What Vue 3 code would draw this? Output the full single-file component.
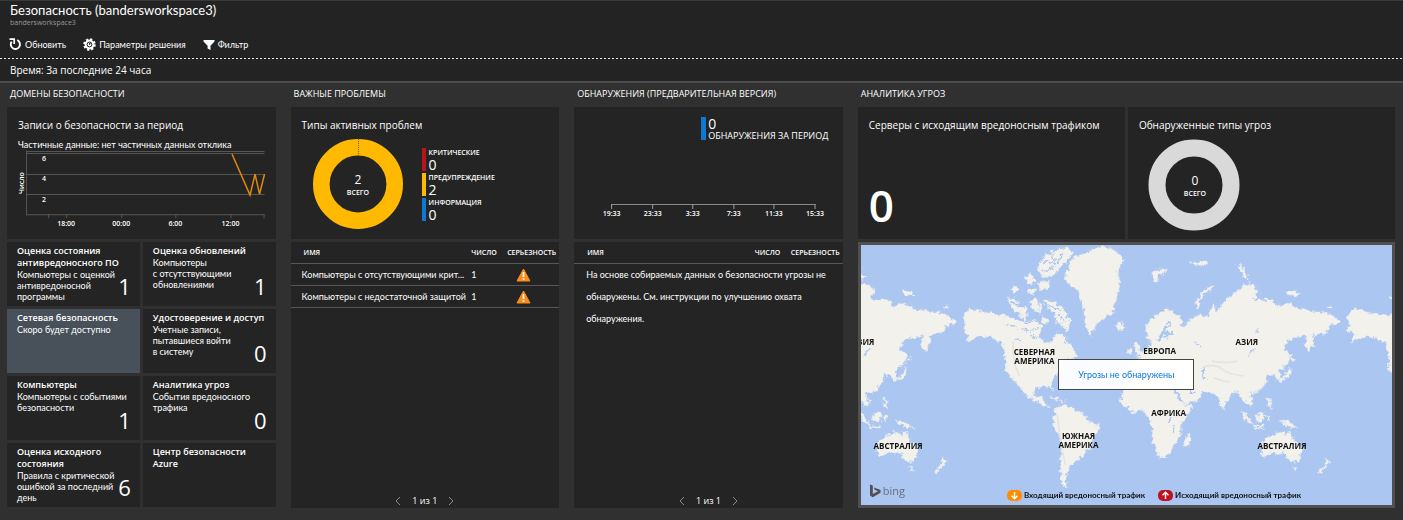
<script setup>
const tiles = [
  { title: 'Оценка состояния\nантивредоносного ПО', text: 'Компьютеры с оценкой\nантивредоносной\nпрограммы', value: '1' },
  { title: 'Оценка обновлений', text: 'Компьютеры\nс отсутствующими\nобновлениями', value: '1' },
  { title: 'Сетевая безопасность', text: 'Скоро будет доступно', value: '', active: true },
  { title: 'Удостоверение и доступ', text: 'Учетные записи,\nпытавшиеся войти\nв систему', value: '0' },
  { title: 'Компьютеры', text: 'Компьютеры с событиями\nбезопасности', value: '1' },
  { title: 'Аналитика угроз', text: 'События вредоносного\nтрафика', value: '0' },
  { title: 'Оценка исходного\nсостояния', text: 'Правила с критической\nошибкой за последний\nдень', value: '6' },
  { title: 'Центр безопасности\nAzure', text: '', value: '' }
]
const legend = [
  { name: 'КРИТИЧЕСКИЕ', value: 0, kind: 'red' },
  { name: 'ПРЕДУПРЕЖДЕНИЕ', value: 2, kind: 'amber' },
  { name: 'ИНФОРМАЦИЯ', value: 0, kind: 'blue' }
]
const issues = [
  { name: 'Компьютеры с отсутствующими крит...', count: 1 },
  { name: 'Компьютеры с недостаточной защитой', count: 1 }
]
const recordTicks = [
  { x: 59, label: '18:00' },
  { x: 114, label: '00:00' },
  { x: 168, label: '6:00' },
  { x: 223, label: '12:00' }
]
const detectTicks = [
  { x: 37, label: '19:33' },
  { x: 78, label: '23:33' },
  { x: 118, label: '3:33' },
  { x: 159, label: '7:33' },
  { x: 199, label: '11:33' },
  { x: 240, label: '15:33' }
]
const mapLabels = [
  { x: 2, y: 100, t: 'АЗИЯ' },
  { x: 385, y: 100, t: 'АЗИЯ' },
  { x: 173, y: 110, t: 'СЕВЕРНАЯ' },
  { x: 173, y: 119, t: 'АМЕРИКА' },
  { x: 298, y: 109, t: 'ЕВРОПА' },
  { x: 307, y: 171, t: 'АФРИКА' },
  { x: 217, y: 194, t: 'ЮЖНАЯ' },
  { x: 217, y: 203, t: 'АМЕРИКА' },
  { x: 37, y: 204, t: 'АВСТРАЛИЯ' },
  { x: 420, y: 204, t: 'АВСТРАЛИЯ' }
]
</script>

<template>
  <main class="page">
    <header class="top">
      <h1>Безопасность (bandersworkspace3)</h1>
      <p class="workspace">bandersworkspace3</p>
      <nav class="toolbar">
        <button type="button">
          <svg width="13" height="13" viewBox="0 0 13 13"><path d="M8.200 2.200A4.600 4.600 0 1 1 2.700 3.600" fill="none" stroke="#fff" stroke-width="1.900" /><path d="M0.500 1.200H5.200V6" fill="none" stroke="#fff" stroke-width="1.700" /></svg>
          Обновить
        </button>
        <button type="button">
          <svg width="13" height="13" viewBox="0 0 13 13"><circle cx="6.500" cy="6.500" r="4.900" fill="#fff" /><circle cx="6.500" cy="6.500" r="5.300" fill="none" stroke="#fff" stroke-width="2" stroke-dasharray="2.200 1.960" /><circle cx="6.500" cy="6.500" r="2.400" fill="none" stroke="#222" stroke-width="1" /><path d="M6.500 5v1.800l1.600-1.600" fill="none" stroke="#222" stroke-width="0.900" /></svg>
          Параметры решения
        </button>
        <button type="button">
          <svg width="12" height="12" viewBox="0 0 12 12"><path d="M0.500 1h11v1.600L7.500 6.800V11L4.600 9.400V6.800L0.500 2.600z" fill="#fff" /></svg>
          Фильтр
        </button>
      </nav>
      <div class="dashes"></div>
      <p class="time">Время: За последние 24 часа</p>
    </header>

    <div class="columns">
      <section class="column">
        <h2>ДОМЕНЫ БЕЗОПАСНОСТИ</h2>
        <div class="panel">
          <h3>Записи о безопасности за период</h3>
          <p class="note">Частичные данные: нет частичных данных отклика</p>
          <svg class="plot records" viewBox="0 0 268 80">
            <g stroke="#555" fill="none">
              <path d="M19.500 0V62M19 1.500H257M19 3.500H257M19 24.500H257M19 44.500H257M19 64.500H257" />
              <path d="M19.500 60v5M41.500 64v4M59.500 64v4M114.500 64v4M168.500 64v4M223.500 64v4M256.500 64v4" />
            </g>
            <path d="M224.500 4L242.500 45L247.500 24L252 44L257 24" fill="none" stroke="#e08a08" stroke-width="1.500" />
            <text x="37" y="11">6</text>
            <text x="37" y="31">4</text>
            <text x="37" y="52">2</text>
            <text v-for="t in recordTicks" :key="t.label" :x="t.x" y="76">{{ t.label }}</text>
            <text class="axis" transform="translate(17 33) rotate(-90)">Число</text>
          </svg>
        </div>
        <div class="tiles">
          <button v-for="t in tiles" :key="t.title" type="button" class="tile" :class="{ active: t.active }">
            <strong>{{ t.title }}</strong>
            <span>{{ t.text }}</span>
            <b v-if="t.value">{{ t.value }}</b>
          </button>
        </div>
      </section>

      <section class="column">
        <h2>ВАЖНЫЕ ПРОБЛЕМЫ</h2>
        <div class="panel">
          <h3>Типы активных проблем</h3>
          <div class="chart-row">
            <svg class="donut" width="92" height="92" viewBox="0 0 92 92">
              <circle cx="46" cy="46" r="36.700" fill="none" stroke="#ffb900" stroke-width="16.600" />
              <path d="M46.500 1v17" stroke="#7a5a10" stroke-dasharray="1 1" />
              <text class="num" x="46" y="46">2</text>
              <text class="cap" x="46" y="57">ВСЕГО</text>
            </svg>
            <ul class="legend">
              <li v-for="l in legend" :key="l.name" :class="l.kind">
                <span>{{ l.name }}</span>
                <b>{{ l.value }}</b>
              </li>
            </ul>
          </div>
        </div>
        <div class="list">
          <table>
            <thead>
              <tr><th class="c-name">ИМЯ</th><th class="c-count">ЧИСЛО</th><th class="c-sev">СЕРЬЕЗНОСТЬ</th></tr>
            </thead>
            <tbody>
              <tr v-for="i in issues" :key="i.name">
                <td class="c-name">{{ i.name }}</td>
                <td class="c-count">{{ i.count }}</td>
                <td class="c-icon">
                  <svg width="15" height="14" viewBox="0 0 15 14"><path d="M7.500 1L14 13H1z" fill="#f78d1e" stroke="#f78d1e" stroke-linejoin="round" /><path d="M7.500 4v5M7.500 10.200v1.600" stroke="#fff" stroke-width="1.600" /></svg>
                </td>
              </tr>
            </tbody>
          </table>
          <div class="pager">
            <button type="button" aria-label="Назад"><svg width="6" height="10" viewBox="0 0 6 10"><path d="M5 1L1 5l4 4" /></svg></button>
            <span>1 из 1</span>
            <button type="button" aria-label="Вперед"><svg width="6" height="10" viewBox="0 0 6 10"><path d="M1 1l4 4-4 4" /></svg></button>
          </div>
        </div>
      </section>

      <section class="column">
        <h2>ОБНАРУЖЕНИЯ (ПРЕДВАРИТЕЛЬНАЯ ВЕРСИЯ)</h2>
        <div class="panel detect">
          <div class="stat">
            <b>0</b>
            <span>ОБНАРУЖЕНИЯ ЗА ПЕРИОД</span>
          </div>
          <svg class="plot" viewBox="0 0 268 24">
            <path d="M37 4.500H241" stroke="#8a8a8a" />
            <path v-for="t in detectTicks" :key="'m' + t.x" :d="`M${t.x + 0.5} 4v5`" stroke="#a0a0a0" />
            <text v-for="t in detectTicks" :key="t.label" :x="t.x + 0.5" y="16">{{ t.label }}</text>
          </svg>
        </div>
        <div class="list">
          <table>
            <thead>
              <tr><th class="c-name">ИМЯ</th><th class="c-count">ЧИСЛО</th><th class="c-sev">СЕРЬЕЗНОСТЬ</th></tr>
            </thead>
            <tbody>
              <tr><td colspan="3" class="message">На основе собираемых данных о безопасности угрозы не обнаружены. См. инструкции по улучшению охвата обнаружения.</td></tr>
            </tbody>
          </table>
          <div class="pager">
            <button type="button" aria-label="Назад"><svg width="6" height="10" viewBox="0 0 6 10"><path d="M5 1L1 5l4 4" /></svg></button>
            <span>1 из 1</span>
            <button type="button" aria-label="Вперед"><svg width="6" height="10" viewBox="0 0 6 10"><path d="M1 1l4 4-4 4" /></svg></button>
          </div>
        </div>
      </section>

      <section class="column">
        <h2>АНАЛИТИКА УГРОЗ</h2>
        <div class="pair">
          <div class="panel servers">
            <h3>Серверы с исходящим вредоносным трафиком</h3>
            <b class="huge">0</b>
          </div>
          <div class="panel threats">
            <h3>Обнаруженные типы угроз</h3>
            <svg class="donut" width="92" height="92" viewBox="0 0 92 92">
              <circle cx="46" cy="46" r="37" fill="none" stroke="#d9d9d9" stroke-width="17" />
              <text class="num" x="47" y="46">0</text>
              <text class="cap" x="47" y="57">ВСЕГО</text>
            </svg>
          </div>
        </div>
        <div class="map">
          <svg class="world" viewBox="0 0 530 260" preserveAspectRatio="xMidYMid slice">
            <defs>
              <filter id="coast" x="0" y="0" width="530" height="260" filterUnits="userSpaceOnUse">
                <feTurbulence type="fractalNoise" baseFrequency="0.25" numOctaves="3" seed="4" result="n" />
                <feDisplacementMap in="SourceGraphic" in2="n" scale="7" xChannelSelector="R" yChannelSelector="G" />
              </filter>
              <g id="east">
                <path d="M284 87L286 78L294 70L306 64L319 72L321 77L318 80L324 80L329 73L339 70L347 72L349 62L352 58L354 67L361 58L374 47L387 38L397 45L392 55L411 55L415 62L426 58L437 64L454 67L467 68L478 77L467 82L464 88L451 90L452 98L447 107L443 100L446 90L437 92L427 95L421 103L429 110L426 119L416 127L419 134L416 135L412 129L406 130L404 138L397 147L387 148L392 158L387 161L379 153L376 147L371 148L361 164L356 153L352 148L341 147L336 155L321 160L314 147L314 135L316 125L290 122L277 125L265 130L268 118L277 113L283 105L289 100L288 95z" />
                <path d="M399 197L407 192L416 187L422 187L424 191L428 185L432 195L441 205L436 217L427 215L422 208L411 208L400 212z" />
                <path d="M431 222h4l-2 4zM464 212l4 5-3 4-7 8-2-2 7-8zM417 175l8 1 12 7-9-1-7-3zM394 171l8-5 2 5-4 6-6-1zM379 165l4 3 9 11-2 1-7-6zM391 180l12 1-1 2-11-1zM405 171l4 0-2 6zM427 122l3 2-4 9-9 4 0-2 6-4zM429 112l5 2-4 3zM405 153l3 0 2 12-3-4zM360 162l3 3-1 2z" />
                <path d="M289 28l8-4 9 0-3 5-6 1-1 8-4-4zM350 41l-9 5-6 9-1 8 4 1-1-7 5-8 8-4zM377 17l5 5 0 6 6 5-5 1-6-9zM327 19l6-3 2 2 8-2 3 3-8 3-4-2zM424 46l7 0 7 4-5 1-8-1zM466 62h4v2h-4zM455 112l2 2z" />
              </g>
              <g id="west">
                <path d="M101 72L109 64L127 68L144 70L161 77L176 75L181 82L177 92L186 98L192 95L194 87L202 90L211 102L217 112L205 115L197 128L189 138L192 147L187 141L174 142L172 150L177 153L182 151L182 157L191 163L181 160L167 152L161 146L152 133L157 142L150 133L144 125L144 115L141 98L127 92L117 92L104 98L109 90L101 85L104 80z" />
                <path d="M176 22L184 10L194 5L207 3L212 8L201 20L191 32L181 32zM145 52l8 2 6 7 6 2 0 7-7-2-6-2zM149 45l5-4 4 3-5 4zM181 55l9 1 11 6 4 8 5 7-5 10-4-7-7-3 0-8-6-5zM163 32l6-3 6 7-8 4zM167 44l8 0-2 6-6-1zM176 38l13-2-2 9-9-1zM168 55l8-1 2 14-7-3zM178 55l3 8-3 8zM160 66l8 3-4 7-6-5zM180 71l8 5-5 4z" />
              </g>
            </defs>
            <rect width="530" height="260" fill="#abc6f1" />
            <g fill="#f3f1ec" filter="url(#coast)">
              <use href="#east" />
              <use href="#east" x="-383" />
              <use href="#west" />
              <use href="#west" x="383" />
              <path d="M211 13L227 7L241 1L252 5L263 15L256 27L258 40L256 52L251 67L234 80L229 90L224 83L222 62L216 45L202 35L207 23z" />
              <path d="M254 80l7-2 2 5-6 3zM272 97l3-1 3 8 3 5-8 1 2-5zM267 104l4 0-1 5-4 0z" />
              <path d="M194 163L202 160L212 163L221 168L226 175L240 180L232 193L229 203L221 210L214 217L206 225L204 235L207 243L199 238L199 212L201 198L191 178z" />
              <path d="M259 157L261 146L270 132L290 128L310 136L314 148L322 160L332 161L319 180L319 190L314 197L307 210L297 213L290 193L291 185L287 172L281 165L271 167z" />
              <path d="M328 187l2 6-4 9-4-2 1-7zM187 151l9 2 2 3-9-3zM199 155h5v2h-5z" />
            </g>
            <g fill="none" stroke="#abc6f1" stroke-linecap="round" filter="url(#coast)">
              <path d="M297 96l4-9 6-9M302 88l7 1M302 93l8-5" stroke-width="2.500" />
              <path d="M314 146l7 12M327 145l5 4M341 124l1 10M312 181v6M307 178l3-4" stroke-width="2" />
              <path d="M386 110l7-6M395 84v4M334 98l4 4M177 112l8 3M161 84l5 1M156 94l4 1M3 110l6-6" stroke-width="1.500" />
              <path d="M183 17l12 2M190 8l3 8M182 27l10-4M201 10l-4 7M150 57l8 4M187 60l12 6M197 70l6 7M150 72l14 6 14-2M176 84l-8 2M146 80l9 2M170 90l5 3M203 97l8 2" stroke-width="1.500" />
            </g>
            <path d="M342 122q10-4 18 2t22 7M350 116q12 3 26 0M352 133q8 3 16 4M152 96q-2 18 6 35M196 170q2 24 8 50" fill="none" stroke="#e6e3dc" stroke-width="1.500" />
            <text v-for="(l, i) in mapLabels" :key="i" :x="l.x" :y="l.y">{{ l.t }}</text>
          </svg>
          <div class="popup">Угрозы не обнаружены</div>
          <div class="bing">
            <svg width="12" height="14" viewBox="0 0 12 14"><path d="M1 0.500L3.800 1.500V10L9 7.200L5.800 5.800L5 3.600L11.500 5.900V8.800L3.800 13.300L1 11.600z" fill="#505050" /></svg>
            bing
          </div>
          <div class="keys">
            <span><svg width="15" height="11" viewBox="0 0 15 11"><rect width="15" height="11" rx="5" fill="#ff8c00" /><path d="M7.500 2v6.500M4.500 5.800l3 3 3-3" fill="none" stroke="#fff" stroke-width="1.400" /></svg>Входящий вредоносный трафик</span>
            <span><svg width="15" height="11" viewBox="0 0 15 11"><rect width="15" height="11" rx="5" fill="#c1121f" /><path d="M7.500 9V2.500M4.500 5.200l3-3 3 3" fill="none" stroke="#fff" stroke-width="1.400" /></svg>Исходящий вредоносный трафик</span>
          </div>
        </div>
      </section>
    </div>
  </main>
</template>

<style>
body {
  background: #303030;
}
</style>

<style scoped>
.page {
  min-height: 100vh;
  background: #303030;
  color: #fff;
  font-family: Lato, "Open Sans", sans-serif;
  font-size: 9px;
}
h1, h2, h3, p, ul {
  margin: 0;
  padding: 0;
  font-weight: 400;
}
button {
  border: 0;
  padding: 0;
  background: none;
  color: inherit;
  font: inherit;
  cursor: pointer;
}
.top {
  background: #232323;
  border-top: 1px solid #3a3a3a;
  border-bottom: 2px solid #4c4c4c;
}
h1 {
  padding-left: 10px;
  font-size: 13px;
  line-height: 18px;
}
.workspace {
  padding-left: 10px;
  font-family: "Open Sans", sans-serif;
  font-size: 7px;
  line-height: 8px;
  color: #9a9a9a;
}
.toolbar {
  display: flex;
  gap: 17px;
  padding: 9px 9px 5px;
}
.toolbar button {
  display: flex;
  align-items: center;
  gap: 3px;
  height: 17px;
}
.dashes {
  height: 1px;
  background: repeating-linear-gradient(90deg, #e8e8e8 0 2px, transparent 2px 4px);
}
.time {
  padding-left: 10px;
  font-family: "Open Sans", sans-serif;
  font-size: 10px;
  line-height: 22px;
}
.columns {
  display: grid;
  grid-template-columns: 1fr 1fr 1fr 2fr;
  gap: 15px;
  padding: 0 8px 11px 7px;
}
.column {
  display: flex;
  flex-direction: column;
  min-width: 0;
}
h2 {
  padding-left: 3px;
  padding-bottom: 2px;
  font-family: "Open Sans", sans-serif;
  font-size: 9px;
  line-height: 22px;
  white-space: nowrap;
}
.panel {
  box-sizing: border-box;
  height: 132px;
  margin-bottom: 3px;
  padding-top: 9px;
  background: #242424;
}
h3 {
  padding-left: 11px;
  font-family: "Open Sans", sans-serif;
  font-size: 10px;
  line-height: 18px;
  white-space: nowrap;
}
.note {
  padding-left: 11px;
  padding-top: 5px;
  line-height: 11px;
  white-space: nowrap;
}
.plot {
  display: block;
  width: 100%;
}
.plot text {
  fill: #fff;
  font-family: "Open Sans", sans-serif;
  font-size: 7px;
  font-weight: 600;
  text-anchor: middle;
}
.tiles {
  display: grid;
  grid-template-columns: 1fr 1fr;
  gap: 3px;
}
.tile {
  position: relative;
  display: flex;
  flex-direction: column;
  height: 64px;
  padding: 3px 0 0 10px;
  background: #242424;
  text-align: left;
  white-space: pre;
}
.tile.active {
  background: #48505a;
}
.tile strong {
  font-family: "Open Sans", sans-serif;
  font-weight: 600;
  line-height: 12px;
}
.tile span {
  line-height: 11px;
}
.tile b {
  position: absolute;
  right: 9px;
  bottom: 8px;
  font-family: "Open Sans", sans-serif;
  font-size: 22px;
  font-weight: 400;
  line-height: 24px;
}
.chart-row {
  display: flex;
  gap: 18px;
  padding: 4px 0 0 21px;
}
.donut {
  display: block;
}
.donut text {
  fill: #fff;
  font-family: "Open Sans", sans-serif;
  text-anchor: middle;
}
.donut .num {
  font-size: 12px;
}
.donut .cap {
  font-size: 7px;
  font-weight: 600;
}
.legend {
  display: flex;
  flex-direction: column;
  gap: 2px;
  padding-top: 10px;
  list-style: none;
}
.legend li {
  display: flex;
  flex-direction: column;
  height: 23px;
  padding-left: 3px;
  border-left-width: 4px;
  border-left-style: solid;
}
.legend span {
  font-family: "Open Sans", sans-serif;
  font-size: 7px;
  font-weight: 600;
  line-height: 9px;
}
.legend b {
  font-family: "Open Sans", sans-serif;
  font-size: 14px;
  font-weight: 400;
  line-height: 16px;
}
.red {
  border-color: #ba141a;
}
.amber {
  border-color: #ffb900;
}
.blue {
  border-color: #0f78d1;
}
.list {
  display: flex;
  flex: 1;
  flex-direction: column;
  justify-content: space-between;
  background: #242424;
}
table {
  width: 100%;
  border-collapse: collapse;
  table-layout: fixed;
}
th, td {
  height: 21px;
  padding: 0;
  border-bottom: 1px solid #565656;
  text-align: left;
  white-space: nowrap;
}
th {
  font-family: "Open Sans", sans-serif;
  font-size: 7px;
  font-weight: 600;
}
th.c-name {
  padding-left: 13px;
}
td.c-name {
  padding-left: 11px;
}
th.c-count {
  width: 36px;
}
th.c-sev {
  width: 52px;
}
.c-icon {
  padding-left: 9px;
}
.c-icon svg {
  display: block;
}
td.message {
  padding: 0 12px;
  border: 0;
  line-height: 22px;
  white-space: normal;
}
.pager {
  display: flex;
  align-items: center;
  justify-content: center;
  gap: 11px;
  height: 15px;
  font-family: "Open Sans", sans-serif;
}
.pager svg {
  display: block;
  fill: none;
  stroke: #8a8a8a;
}
.stat {
  display: flex;
  flex-direction: column;
  width: max-content;
  height: 23px;
  margin: 1px auto 60px 127px;
  padding-left: 2px;
  border-left: 5px solid #0f78d1;
}
.stat b {
  font-family: "Open Sans", sans-serif;
  font-size: 14px;
  font-weight: 400;
  line-height: 14px;
}
.stat span {
  font-family: "Open Sans", sans-serif;
  line-height: 9px;
}
.pair {
  display: grid;
  grid-template-columns: 1fr 1fr;
  gap: 3px;
}
.huge {
  display: block;
  padding: 39px 0 0 11px;
  font-family: "Open Sans", sans-serif;
  font-size: 44px;
  font-weight: 600;
  line-height: 64px;
}
.threats .donut {
  margin: 5px 0 0 20px;
}
.map {
  position: relative;
  flex: 1;
  min-height: 260px;
  border: 3px solid #505050;
}
.world {
  position: absolute;
  inset: 0;
  width: 100%;
  height: 100%;
}
.world text {
  fill: #111;
  font-family: "Open Sans", sans-serif;
  font-size: 8px;
  font-weight: 700;
  text-anchor: middle;
}
.popup {
  position: absolute;
  top: 50%;
  left: 50%;
  box-sizing: border-box;
  width: 136px;
  margin: -16px 0 0 -68px;
  border: 1px solid #444;
  background: rgba(255, 255, 255, 0.94);
  color: #0f78d1;
  line-height: 29px;
  text-align: center;
}
.bing {
  position: absolute;
  left: 8px;
  bottom: 7px;
  display: flex;
  align-items: center;
  gap: 2px;
  color: #6a6f78;
  font-family: "Open Sans", sans-serif;
  font-size: 11px;
  line-height: 15px;
}
.keys {
  position: absolute;
  right: 91px;
  bottom: 4px;
  display: flex;
  gap: 13px;
  color: #111;
  font-size: 8px;
  font-weight: 700;
  line-height: 11px;
}
.keys span {
  display: flex;
  gap: 2px;
}
</style>
